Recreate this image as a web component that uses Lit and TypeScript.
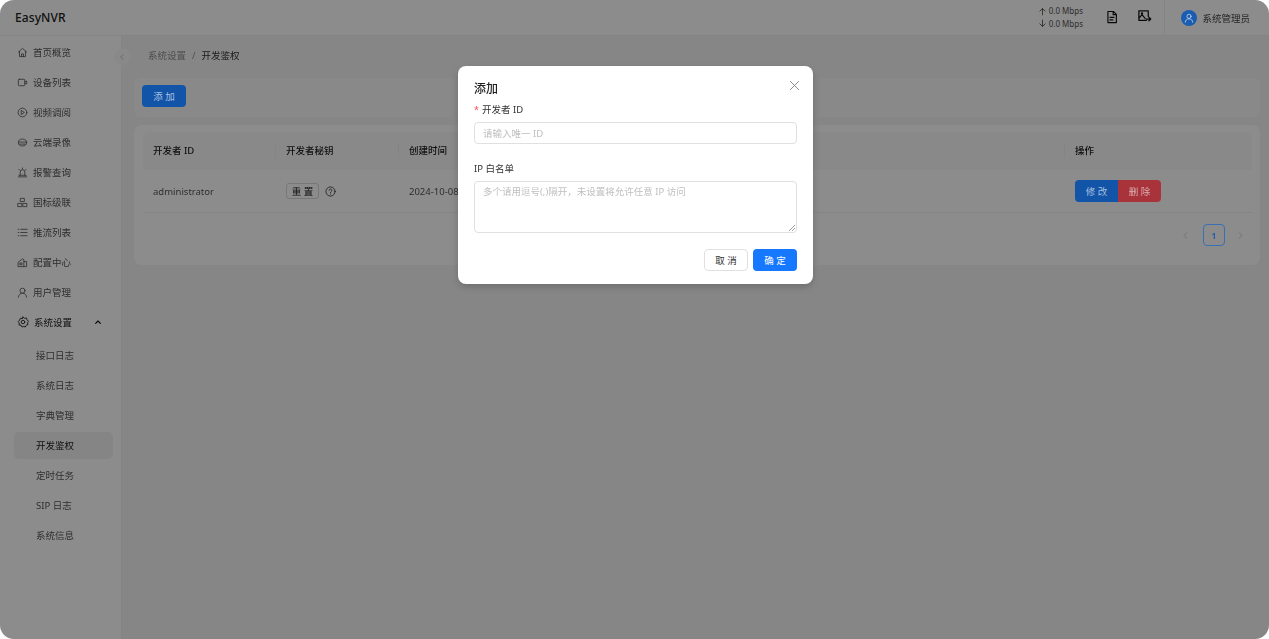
import { LitElement, html, css, svg } from "lit";
import { customElement } from "lit/decorators.js";

const ic = (body: unknown, size = 12) => html`<svg class="ic" width=${size} height=${size} viewBox="0 0 24 24" fill="none" stroke="currentColor" stroke-width="1.8" stroke-linecap="round" stroke-linejoin="round">${body}</svg>`;

const menu: [string, unknown][] = [
  ["首页概览", svg`<path d="M3 11 12 3l9 8M5.500 9.500V21h13V9.500M10 21v-6h4v6"/>`],
  ["设备列表", svg`<rect x="3" y="5" width="14" height="14" rx="2"/><path d="M17 10l4-1v6l-4-1"/>`],
  ["视频调阅", svg`<circle cx="12" cy="12" r="9.500"/><path d="M10 8l6 4-6 4z"/>`],
  ["云端录像", svg`<ellipse cx="12" cy="12" rx="9" ry="7.500"/><path d="M3.500 11h17M6 15.500h12"/>`],
  ["报警查询", svg`<path d="M7 18v-7a5 5 0 0 1 10 0v7M3 21.500h18M4 5l2 2M20 5l-2 2M12 2v2M4 18h16"/>`],
  ["国标级联", svg`<rect x="8" y="3" width="8" height="7"/><rect x="2.500" y="14" width="8" height="7"/><rect x="13.500" y="14" width="8" height="7"/>`],
  ["推流列表", svg`<path d="M8 5h14M8 12h14M8 19h14M2.500 5h1.500M2.500 12h1.500M2.500 19h1.500"/>`],
  ["配置中心", svg`<path d="M3 11l9-7 3 2v15H3zM15 10h6v11h-6M7 13h4v4H7z"/>`],
  ["用户管理", svg`<circle cx="12" cy="8" r="5.500"/><path d="M3 22c.6-5 4-8.500 9-8.500s8.400 3.500 9 8.500"/>`],
];
const subs = ["接口日志", "系统日志", "字典管理", "开发鉴权", "定时任务", "SIP 日志", "系统信息"];

@customElement("app-root")
export class AppRoot extends LitElement {
  static styles = css`
    :host { display: block; width: 1269px; height: 639px; background: #fff; overflow: hidden; position: relative;
      font-family: "Noto Sans", "Noto Sans CJK SC", sans-serif; font-size: 9.5px; color: rgba(0,0,0,.88); }
    .ic { display: block; flex: none; }
    .shell { position: relative; width: 1269px; height: 639px; border-radius: 14px; overflow: hidden; background: #f5f5f5;
      display: flex; flex-direction: column; filter: blur(.5px); }
    .header { height: 36px; flex: none; display: flex; align-items: center; background: #fff; border-bottom: 1px solid #f0f0f0; box-sizing: border-box; padding-left: 15px; }
    .logo { font-size: 12px; font-weight: 500; color: #222; letter-spacing: .1px; }
    .speed { margin-left: auto; display: flex; flex-direction: column; gap: 2.500px; font-size: 8px; line-height: 10px; color: #555; }
    .speed div { display: flex; align-items: center; gap: 1.500px; }
    .tool { margin-left: 22.500px; margin-bottom: 2px; color: #111; }
    .tool + .tool { margin-left: 18px; }
    .user { margin-left: 12px; height: 36px; border-left: 1px solid #f0f0f0; padding: 0 19px 0 16px; display: flex; align-items: center; gap: 5px; color: #444; }
    .avatar { width: 16px; height: 16px; border-radius: 50%; background: #1a5cb0; color: #d5dfec; display: flex; align-items: center; justify-content: center; position: relative; z-index: 6; }
    .body { flex: 1; display: flex; min-height: 0; }
    .side { width: 122px; flex: none; background: #fff; border-right: 1px solid #f0f0f0; box-sizing: border-box; position: relative; padding-top: 1px; }
    .item { height: 30px; display: flex; align-items: center; padding-left: 17px; gap: 5px; color: #555; }
    .item.open { color: #222; }
    .chev { margin-left: 17px; color: #111; }
    .subs { margin-top: 3px; display: flex; flex-direction: column; }
    .sub { height: 30px; margin-left: 14px; width: 99px; display: flex; align-items: center; padding-left: 22px; box-sizing: border-box; color: #555; border-radius: 4px; position: relative; }
    .sub.on { color: #222; }
    .sub.on::before { content: ""; position: absolute; left: 0; right: 0; top: 1.500px; bottom: 1.500px; background: #f3f3f3; border-radius: 5px; z-index: 0; }
    .sub span { position: relative; }
    .collapse { position: absolute; right: -9px; top: 13px; width: 16px; height: 16px; border-radius: 50%; background: #fafafa; color: #999; display: flex; align-items: center; justify-content: center; z-index: 1; }
    .main { flex: 1; min-width: 0; padding: 0 9px 0 12px; display: flex; flex-direction: column; }
    .crumb { height: 42px; flex: none; display: flex; align-items: center; padding: 0 0 4px 14px; box-sizing: border-box; gap: 6px; color: #8c8c8c; }
    .crumb b { font-weight: 400; color: #333; }
    .bar { height: 39px; flex: none; background: #fafafa; border-radius: 8px; box-sizing: border-box; padding: 7px 8px; margin-bottom: 8px; }
    .btn { display: inline-flex; align-items: center; justify-content: center; box-sizing: border-box; width: 44px; height: 22px; border-radius: 4px; font-size: 9.5px; background: #1254a8; color: #a9c0de; white-space: pre; position: relative; z-index: 6; }
    .card { height: 140px; flex: none; background: #fff; border-radius: 8px; padding: 7px 8px 0 9px; box-sizing: border-box; }
    .row { display: grid; grid-template-columns: 133px 123px 666px 1fr; }
    .cell { display: flex; align-items: center; padding-left: 10px; position: relative; }
    .thead { height: 38px; background: #fafafa; border-radius: 8px 8px 0 0; font-weight: 500; color: #222; }
    .thead .cell { padding-bottom: 2px; }
    .thead .cell + .cell::before { content: ""; position: absolute; left: -1px; top: 12px; bottom: 12px; width: 1px; background: #f0f0f0; }
    .tbody { height: 43px; border-bottom: 1px solid #f0f0f0; color: #555; box-sizing: border-box; }
    .reset { width: 33px; height: 16px; box-sizing: border-box; border: 1px solid #d9d9d9; border-radius: 3px; display: flex; align-items: center; justify-content: center; color: #222; white-space: pre; background: #fff; }
    .help { margin-left: 6px; color: #333; }
    .ops { display: flex; }
    .ops .btn { width: 43px; border-radius: 4px 0 0 4px; }
    .ops .del { background: #a9333a; color: #d9b0b3; border-radius: 0 4px 4px 0; }
    .pager { height: 52px; display: flex; align-items: center; justify-content: flex-end; padding-right: 7px; color: #bbb; gap: 11px; padding-bottom: 8px; box-sizing: border-box; }
    .prev { margin-right: 2px; }
    .page { width: 22px; height: 22px; box-sizing: border-box; border: 1px solid #3a6fb5; border-radius: 4px; color: #1d5cae; font-weight: 600; display: flex; align-items: center; justify-content: center; position: relative; z-index: 6; }
    .mask { position: absolute; inset: 0; background: rgba(0,0,0,.45); z-index: 5; }
    .modal { position: absolute; z-index: 7; left: 458px; top: 66px; width: 355px; height: 218px; box-sizing: border-box; background: #fff; border-radius: 8px; padding: 15px 16px 13px; display: flex; flex-direction: column; box-shadow: 0 3px 8px rgba(0,0,0,.2); }
    .title { font-size: 12px; line-height: 16px; color: #222; font-weight: 500; }
    .close { position: absolute; left: 331px; top: 14px; color: #777; }
    .label { line-height: 14px; color: #333; }
    .req { color: #ff4d4f; margin-right: 3px; font-size: 9px; }
    .input { height: 22px; margin-top: 5px; border: 1px solid #e0e0e0; border-radius: 4px; box-sizing: border-box; padding-left: 8px; display: flex; align-items: center; color: #bfbfbf; }
    .area { height: 52px; margin-top: 5px; border: 1px solid #e0e0e0; border-radius: 4px; box-sizing: border-box; padding: 3px 8px; color: #bfbfbf; position: relative; line-height: 14px; }
    .grip { position: absolute; right: 1px; bottom: 1px; color: #888; }
    .gap1 { margin-top: 6px; }
    .gap2 { margin-top: 18px; }
    .foot { margin-top: auto; display: flex; justify-content: flex-end; gap: 5px; }
    .ghost { background: #fff; color: #333; border: 1px solid #e0e0e0; }
    .ok { background: #1677ff; color: #fff; }
  `;

  render() {
    return html`<div class="shell">
      <div class="header">
        <div class="logo">EasyNVR</div>
        <div class="speed">
          <div>${ic(svg`<path d="M12 21V4M5 11l7-7 7 7" stroke-width="2.400"/>`, 9)}0.0 Mbps</div>
          <div>${ic(svg`<path d="M12 3v17M5 13l7 7 7-7" stroke-width="2.400"/>`, 9)}0.0 Mbps</div>
        </div>
        <div class="tool">${ic(svg`<path d="M5 2.500h9.500l5 5V21.500H5zM14 3v5h5M8.500 12.500h7M8.500 17h5" stroke-width="2"/>`, 14)}</div>
        <div class="tool">${ic(svg`<path d="M15 18H3V3h15v9M3 15l5-6 5 6M15 16h7M19 13l3 3-3 3" stroke-width="2"/><circle cx="8" cy="7" r="1"/>`, 15)}</div>
        <div class="user">
          <div class="avatar">${ic(svg`<circle cx="12" cy="8" r="5"/><path d="M3 22c.6-5 4-8 9-8s8.400 3 9 8"/>`, 10)}</div>
          <span>系统管理员</span>
        </div>
      </div>
      <div class="body">
        <aside class="side">
          <div class="collapse">${ic(svg`<path d="M15 5l-7 7 7 7"/>`, 8)}</div>
          ${menu.map(([t, i]) => html`<div class="item">${ic(i, 11)}<span>${t}</span></div>`)}
          <div class="item open">
            ${ic(svg`<path d="M12 2l3 2.500 4-.5 1 3.500 3 3-2 3 1 3.500-3.500 1.500-2 3.500-3-1-3.500 1-2-3.500L4 18l.5-4-2-3 3-3 1-3.500 4 .5z"/><circle cx="12" cy="12" r="3.500"/>`, 12)}
            <span>系统设置</span>
            <span class="chev">${ic(svg`<path d="M5 16l7-7 7 7" stroke-width="3.500"/>`, 8)}</span>
          </div>
          <div class="subs">
            ${subs.map((s) => html`<div class="sub ${s === "开发鉴权" ? "on" : ""}"><span>${s}</span></div>`)}
          </div>
        </aside>
        <main class="main">
          <div class="crumb"><span>系统设置</span><span>/</span><b>开发鉴权</b></div>
          <div class="bar"><span class="btn">添 加</span></div>
          <div class="card">
            <div class="row thead">
              <div class="cell">开发者 ID</div><div class="cell">开发者秘钥</div><div class="cell">创建时间</div><div class="cell">操作</div>
            </div>
            <div class="row tbody">
              <div class="cell">administrator</div>
              <div class="cell"><span class="reset">重 置</span><span class="help">${ic(svg`<circle cx="12" cy="12" r="10"/><path d="M9 9.500a3 3 0 1 1 4.500 2.600c-1 .6-1.500 1.200-1.500 2.400M12 17.500v.2"/>`, 11)}</span></div>
              <div class="cell">2024-10-08</div>
              <div class="cell"><div class="ops"><span class="btn">修 改</span><span class="btn del">删 除</span></div></div>
            </div>
            <div class="pager">
              <span class="prev">${ic(svg`<path d="M15 5l-7 7 7 7"/>`, 9)}</span>
              <span class="page">1</span>
              ${ic(svg`<path d="M9 5l7 7-7 7"/>`, 9)}
            </div>
          </div>
        </main>
      </div>
      <div class="mask"></div>
      <div class="modal">
        <div class="title">添加</div>
        <div class="close">${ic(svg`<path d="M3 3l18 18M21 3L3 21" stroke-width="1.800"/>`, 11)}</div>
        <div class="label gap1"><span class="req">*</span>开发者 ID</div>
        <div class="input">请输入唯一 ID</div>
        <div class="label gap2">IP 白名单</div>
        <div class="area">多个请用逗号(,)隔开，未设置将允许任意 IP 访问
          <svg class="grip" width="7" height="7" viewBox="0 0 7 7" stroke="currentColor" stroke-width=".8"><path d="M1 7l6-6M4 7l3-3"/></svg>
        </div>
        <div class="foot"><span class="btn ghost">取 消</span><span class="btn ok">确 定</span></div>
      </div>
    </div>`;
  }
}
